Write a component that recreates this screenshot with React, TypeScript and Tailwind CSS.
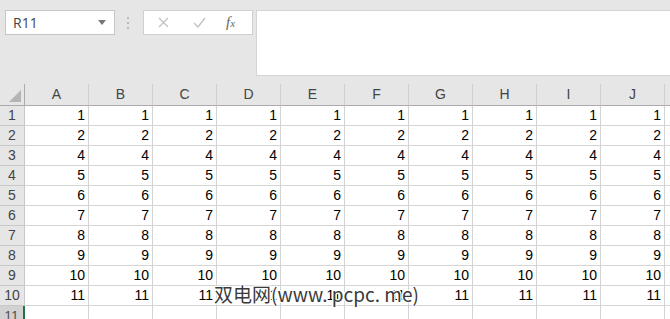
const COLS = ["A", "B", "C", "D", "E", "F", "G", "H", "I", "J"];
const VALUES = [1, 2, 4, 5, 6, 7, 8, 9, 10, 11];

function NameBox() {
  return (
    <div className="flex h-[25px] w-[110px] items-center justify-between border border-[#c6c6c6] bg-white pl-[7px] pr-[8px]">
      <span className="text-[14px] text-[#444]" style={{ fontFamily: '"Open Sans", sans-serif' }}>
        R11
      </span>
      <svg width="8" height="5" viewBox="0 0 8 5">
        <path d="M0 0 H8 L4 5 Z" fill="#777" />
      </svg>
    </div>
  );
}

function FormulaButtons() {
  return (
    <div className="flex h-[25px] w-[110px] items-center border border-[#d0d0d0] bg-white">
      <svg className="ml-[14px]" width="11" height="11" viewBox="0 0 11 11">
        <path d="M1 1 L10 10 M10 1 L1 10" stroke="#c2c2c2" strokeWidth="1.3" />
      </svg>
      <svg className="ml-[24px]" width="13" height="11" viewBox="0 0 13 11">
        <path d="M1 6 L5 10 L12 1" stroke="#c2c2c2" strokeWidth="1.4" fill="none" />
      </svg>
      <span
        className="ml-[20px] text-[15px] italic text-[#666]"
        style={{ fontFamily: '"Liberation Serif", serif' }}
      >
        f<span className="text-[11px]">x</span>
      </span>
    </div>
  );
}

function Toolbar() {
  return (
    <div className="flex h-[84px] items-start pt-[10px] pl-[5px]">
      <NameBox />
      <div className="ml-[12px] mt-[7px] flex flex-col gap-[3px]">
        <div className="h-[2px] w-[2px] bg-[#b9b9b9]" />
        <div className="h-[2px] w-[2px] bg-[#b9b9b9]" />
        <div className="h-[2px] w-[2px] bg-[#b9b9b9]" />
      </div>
      <div className="ml-[14px]">
        <FormulaButtons />
      </div>
      <div className="ml-[3px] h-[66px] flex-1 border border-r-0 border-[#d4d4d4] bg-white" />
    </div>
  );
}

function Row({ index, value }: { index: number; value: number }) {
  return (
    <>
      <div className="flex h-[20px] items-center justify-center border-b border-r border-[#c8c8c8] bg-[#e6e6e6] text-[#444]">
        {index}
      </div>
      {COLS.map((c) => (
        <div
          key={c}
          className="flex h-[20px] items-center justify-end border-b border-r border-[#d4d4d4] bg-white pr-[3px] text-black"
        >
          {value}
        </div>
      ))}
      <div className="h-[20px] border-b border-[#d4d4d4] bg-white" />
    </>
  );
}

function Grid() {
  const font = { fontFamily: '"Liberation Sans", Arial, sans-serif' };
  return (
    <div className="grid grid-cols-[25px_repeat(10,64px)_1fr] text-[14px]" style={font}>
      {/* header row */}
      <div className="flex h-[22px] items-end justify-end border-b border-r border-[#ababab] bg-[#e6e6e6] pb-[3px] pr-[3px]">
        <svg width="12" height="12" viewBox="0 0 12 12">
          <path d="M12 0 V12 H0 Z" fill="#b4b4b4" />
        </svg>
      </div>
      {COLS.map((c) => (
        <div
          key={c}
          className="flex h-[22px] items-center justify-center border-b border-r border-b-[#ababab] border-r-[#d0d0d0] bg-[#e6e6e6] text-[#444]"
        >
          {c}
        </div>
      ))}
      <div className="h-[22px] border-b border-[#ababab] bg-[#e6e6e6]" />

      {VALUES.map((v, i) => (
        <Row key={i} index={i + 1} value={v} />
      ))}

      {/* row 11, selected */}
      <div className="flex h-[20px] items-center justify-center border-r-2 border-[#217346] bg-[#d2d2d2] text-[#555]">
        11
      </div>
      {COLS.map((c) => (
        <div key={c} className="h-[20px] border-r border-[#d4d4d4] bg-white" />
      ))}
      <div className="h-[20px] bg-white" />
    </div>
  );
}

export default function App() {
  return (
    <div className="relative h-[319px] w-[670px] overflow-hidden bg-[#e6e6e6]">
      <Toolbar />
      <Grid />
      {/* watermark */}
      <div
        className="absolute left-[214px] top-[284px] text-[19px] leading-none text-[#3a3a3a]"
        style={{
          fontFamily: '"Noto Sans CJK SC", sans-serif',
          textShadow:
            "1px 0 0 #fff, -1px 0 0 #fff, 0 1px 0 #fff, 0 -1px 0 #fff, 1px 1px 0 #fff, -1px -1px 0 #fff, 1px -1px 0 #fff, -1px 1px 0 #fff",
        }}
      >
        双电网(www. pcpc. me)
      </div>
    </div>
  );
}
